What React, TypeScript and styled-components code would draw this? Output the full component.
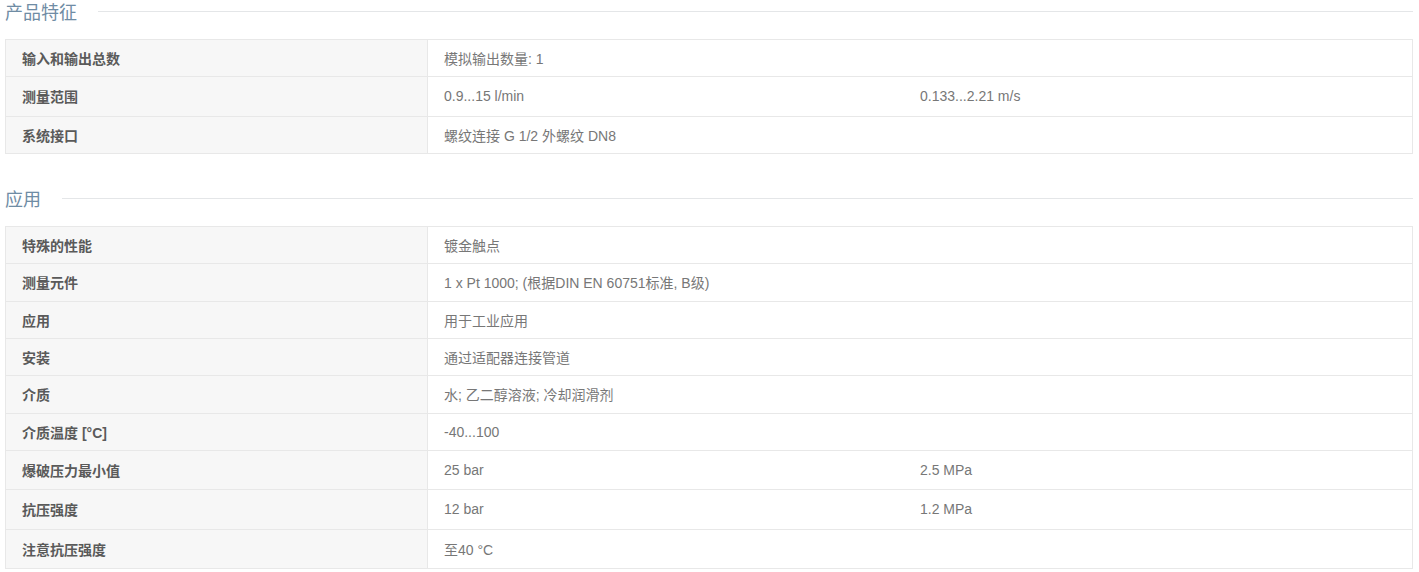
import React from "react";
import styled, { createGlobalStyle } from "styled-components";

const Global = createGlobalStyle`
  html, body { margin: 0; padding: 0; background: #ffffff; }
  body {
    font-family: "Liberation Sans", "Noto Sans CJK SC", sans-serif;
    -webkit-font-smoothing: antialiased;
  }
`;

const Page = styled.div`
  padding: 0 6px 0 5px;
`;

const Section = styled.section`
  & + & { margin-top: 33px; }
`;

const SectionHeader = styled.div`
  display: flex;
  align-items: center;
  gap: 21px;
  height: 23px;
  margin-bottom: 16px;
`;

const Title = styled.h2`
  margin: 0;
  font-size: 18px;
  line-height: 23px;
  font-weight: 400;
  color: #6f8ca4;
  font-family: "Noto Sans CJK SC", sans-serif;
  white-space: nowrap;
`;

const Rule = styled.div`
  flex: 1;
  height: 1px;
  background: #e4e6e8;
`;

const Table = styled.div`
  border: 1px solid #e8e8e8;
  border-bottom: none;
`;

const Row = styled.div<{ $h: number }>`
  display: grid;
  grid-template-columns: 422px 1fr;
  height: ${(p) => p.$h}px;
  border-bottom: 1px solid #e8e8e8;
`;

const Label = styled.div`
  display: flex;
  align-items: center;
  padding: 0 0 1px 16px;
  background: #f7f7f7;
  border-right: 1px solid #e8e8e8;
  font-size: 14px;
  font-weight: 700;
  color: #5a5a5a;
`;

const Value = styled.div`
  display: flex;
  align-items: center;
  padding: 0 0 1px 16px;
  font-size: 14px;
  color: #777777;
`;

const Part = styled.span`
  width: 476px;
  flex: none;
`;

type Item = { label: string; values: string[]; h: number };

const features: Item[] = [
  { label: "输入和输出总数", values: ["模拟输出数量: 1"], h: 36 },
  { label: "测量范围", values: ["0.9...15 l/min", "0.133...2.21 m/s"], h: 39 },
  { label: "系统接口", values: ["螺纹连接 G 1/2 外螺纹 DN8"], h: 36 },
];

const application: Item[] = [
  { label: "特殊的性能", values: ["镀金触点"], h: 36 },
  { label: "测量元件", values: ["1 x Pt 1000; (根据DIN EN 60751标准, B级)"], h: 37 },
  { label: "应用", values: ["用于工业应用"], h: 36 },
  { label: "安装", values: ["通过适配器连接管道"], h: 36 },
  { label: "介质", values: ["水; 乙二醇溶液; 冷却润滑剂"], h: 37 },
  { label: "介质温度 [°C]", values: ["-40...100"], h: 36 },
  { label: "爆破压力最小值", values: ["25 bar", "2.5 MPa"], h: 38 },
  { label: "抗压强度", values: ["12 bar", "1.2 MPa"], h: 39 },
  { label: "注意抗压强度", values: ["至40 °C"], h: 38 },
];

function SpecTable({ items }: { items: Item[] }) {
  return (
    <Table>
      {items.map((it) => (
        <Row key={it.label} $h={it.h}>
          <Label>{it.label}</Label>
          <Value>
            {it.values.map((v, i) =>
              i < it.values.length - 1 ? <Part key={i}>{v}</Part> : <span key={i}>{v}</span>
            )}
          </Value>
        </Row>
      ))}
    </Table>
  );
}

export default function App() {
  return (
    <Page>
      <Global />
      <Section>
        <SectionHeader>
          <Title>产品特征</Title>
          <Rule />
        </SectionHeader>
        <SpecTable items={features} />
      </Section>
      <Section>
        <SectionHeader>
          <Title>应用</Title>
          <Rule />
        </SectionHeader>
        <SpecTable items={application} />
      </Section>
    </Page>
  );
}
